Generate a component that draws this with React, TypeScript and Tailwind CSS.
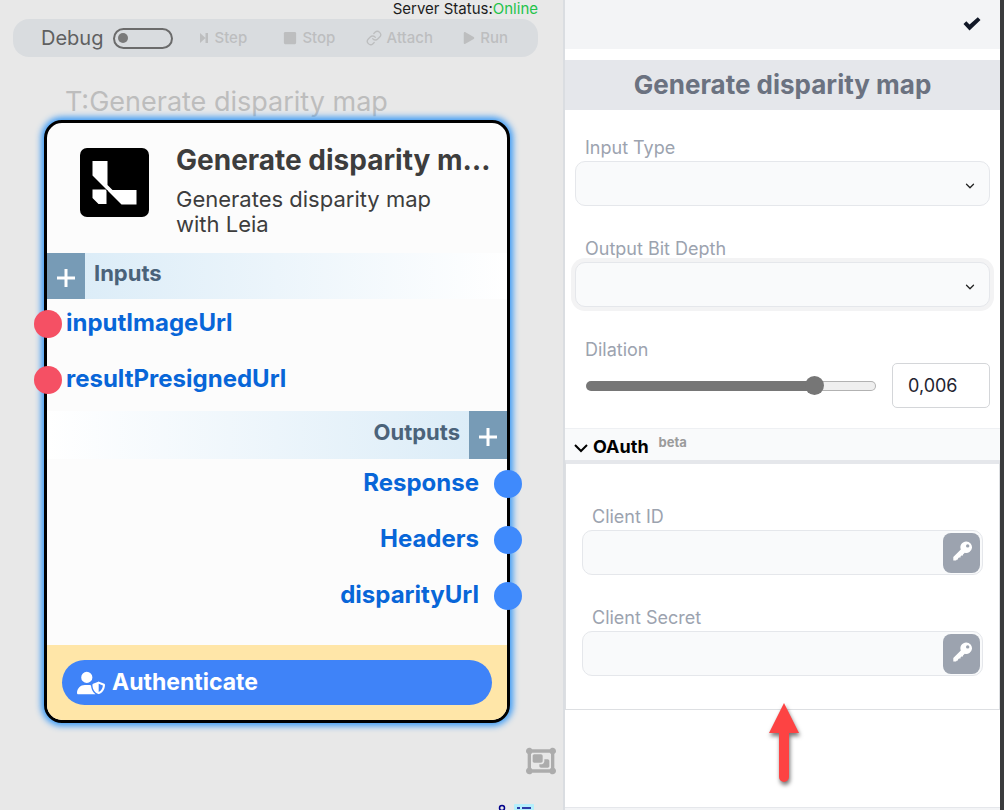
import { useState } from "react";
import type { ReactNode } from "react";
import { FaPlay, FaStop } from "react-icons/fa";
import { FaObjectGroup, FaUserShield } from "react-icons/fa6";
import { LuChevronDown, LuLink } from "react-icons/lu";

function ToolButton({ icon, label }: { icon: ReactNode; label: string }) {
  return (
    <button type="button" className="flex items-center gap-[5px] text-[15px] font-medium text-[#bdbebf]">
      {icon}
      {label}
    </button>
  );
}

function StepIcon() {
  return (
    <svg viewBox="0 0 8 12" className="mr-px h-3 w-2 fill-current" aria-hidden="true">
      <path d="M0 1L5.500 6L0 11ZM5.500 1H8V11H5.500Z" />
    </svg>
  );
}

function KeyIcon() {
  return (
    <svg viewBox="0 0 20 20" className="size-5 fill-current" aria-hidden="true">
      <path
        fillRule="evenodd"
        d="M14.300 0.600A5.700 5.700 0 1 1 12.800 11.800L11 13.500V14.500H9.500L8.500 15.500V16.500H7L6 17.500V18.500H5L4 19.500H1.300V16L8.800 8.500A5.700 5.700 0 0 1 14.300 0.600ZM15.700 3.200A1.700 1.700 0 1 0 15.700 6.600A1.700 1.700 0 1 0 15.700 3.200Z"
      />
    </svg>
  );
}

function Toolbar() {
  const [debug, setDebug] = useState(false);
  return (
    <div className="mx-[13px] mt-px mr-[25px] flex h-[38px] items-center rounded-2xl bg-[#d9dcdf] pr-[30px] pl-7">
      <label htmlFor="debug" className="text-[20px] text-[#5f6061]">
        Debug
      </label>
      <input
        id="debug"
        type="checkbox"
        checked={debug}
        onChange={(e) => setDebug(e.target.checked)}
        className="ml-2.5 flex h-[21px] w-[60px] appearance-none items-center rounded-full border-2 border-[#6b6b6b] px-[3px] before:size-2.5 before:rounded-full before:bg-[#7a7a7a] checked:justify-end"
      />
      <div className="ml-[27px] flex flex-1 items-center justify-between">
        <ToolButton label="Step" icon={<StepIcon />} />
        <ToolButton label="Stop" icon={<FaStop className="ml-1.5 size-3.5" />} />
        <ToolButton label="Attach" icon={<LuLink className="size-4" />} />
        <ToolButton label="Run" icon={<FaPlay className="size-3" />} />
      </div>
    </div>
  );
}

function LeiaLogo() {
  return (
    <svg viewBox="0 0 69 69" className="size-[69px] shrink-0" aria-hidden="true">
      <rect width="69" height="69" rx="7" fill="#000" />
      <path
        d="M12.500 13H27.500V37L32.500 42H56.500V56.500H41.500L12.500 27.500ZM12.500 41.500H25.500L27 43V56H18.500L12.500 50Z"
        fill="#fff"
      />
      <path d="M27 42V57" stroke="#000" strokeWidth="1" />
    </svg>
  );
}

function AddButton({ label }: { label: string }) {
  return (
    <button
      type="button"
      aria-label={label}
      className="flex w-[38px] shrink-0 items-center justify-center self-stretch bg-[#779bb6] pt-1"
    >
      <svg viewBox="0 0 18 18" className="size-[18px]" aria-hidden="true">
        <path d="M9 0V18M0 9H18" stroke="#fff" strokeWidth="3" />
      </svg>
    </button>
  );
}

function InputPort({ name }: { name: string }) {
  return (
    <li className="relative h-14 pl-[19px] leading-[48px]">
      <span className="absolute top-[11px] -left-[13px] size-7 rounded-full bg-[#f55064]" />
      {name}
    </li>
  );
}

function OutputPort({ name }: { name: string }) {
  return (
    <li className="relative h-14 pr-7 text-right leading-[48px]">
      <span className="absolute top-[11px] -right-[15px] size-7 rounded-full bg-[#3f8afc]" />
      {name}
    </li>
  );
}

function NodeCard() {
  return (
    <article className="mr-[53px] ml-11 flex flex-col rounded-[18px] border-[3px] border-black bg-[#fcfcfc] shadow-[0_0_6px_3px_#3d9bf5]">
      <header className="flex h-[130px] gap-[27px] pt-[25px] pr-3 pl-[33px]">
        <LeiaLogo />
        <div className="-mt-2 min-w-0 flex-1">
          <h2 className="truncate text-[28px] leading-10 font-bold text-[#3d3d3d]">Generate disparity map</h2>
          <p className="mt-[7px] pr-10 text-[22px] leading-[25px] text-[#3d3d3d]">Generates disparity map with Leia</p>
        </div>
      </header>

      <div className="flex h-[46px] bg-linear-to-r from-[#d9ebf7] to-white">
        <AddButton label="Add input" />
        <h3 className="pt-1 pl-[9px] text-[22px] leading-8 font-bold text-[#4b637a]">Inputs</h3>
      </div>
      <ul className="h-28 text-[24px] font-bold text-[#0866d8]">
        <InputPort name="inputImageUrl" />
        <InputPort name="resultPresignedUrl" />
      </ul>

      <div className="flex h-12 justify-end bg-linear-to-l from-[#d9ebf7] to-white">
        <h3 className="pt-[5px] pr-[9px] text-[22px] leading-8 font-bold text-[#4b637a]">Outputs</h3>
        <AddButton label="Add output" />
      </div>
      <ul className="h-[186px] text-[24px] font-bold text-[#0866d8]">
        <OutputPort name="Response" />
        <OutputPort name="Headers" />
        <OutputPort name="disparityUrl" />
      </ul>

      <footer className="rounded-b-[15px] bg-[#ffe6a8] p-[15px]">
        <button
          type="button"
          className="flex h-[45px] w-full items-center gap-[7px] rounded-full bg-[#3f83f8] pl-[15px] text-[23px] font-bold text-white"
        >
          <FaUserShield className="size-7" />
          Authenticate
        </button>
      </footer>
    </article>
  );
}

function Canvas() {
  return (
    <main className="flex min-w-0 flex-1 flex-col overflow-hidden bg-[#e8e8e8]">
      <p className="pr-[25px] text-right text-[15px] leading-[18px] text-[#1c1c1c]">
        Server Status:<span className="text-[#1fc34a]">Online</span>
      </p>
      <Toolbar />
      <h1 className="pt-[27px] pl-[65px] text-[27px] leading-9 text-[#bdbdbd]">T:Generate disparity map</h1>
      <NodeCard />
      <div className="mt-auto flex flex-col items-end pr-[7px]">
        <button type="button" aria-label="Group nodes" className="text-[#acacac]">
          <FaObjectGroup className="size-[30px]" />
        </button>
        <svg viewBox="0 0 36 6" className="mt-[28px] mr-[22px] h-[6px] w-9" aria-hidden="true">
          <circle cx="4" cy="4" r="2.500" fill="none" stroke="#00008b" strokeWidth="1.500" />
          <rect x="16" width="20" height="8" rx="1" fill="#b4effc" />
          <path d="M19 4H22M24 4H33" stroke="#00008b" strokeWidth="1.500" />
        </svg>
      </div>
    </main>
  );
}

function SelectField({ id, label, focused = false }: { id: string; label: string; focused?: boolean }) {
  return (
    <div>
      <label htmlFor={id} className="block pl-2.5 text-[18px] leading-[26px] text-[#9ca3af]">
        {label}
      </label>
      <div className="relative">
        <select
          id={id}
          className={
            focused
              ? "block h-[45px] w-full appearance-none rounded-[10px] border border-[#e5e7eb] bg-[#f9fafb] px-4 ring-4 ring-[#f3f3f4] outline-none"
              : "block h-[45px] w-full appearance-none rounded-[10px] border border-[#e5e7eb] bg-[#f9fafb] px-4 outline-none"
          }
        >
          <option value="" />
        </select>
        <LuChevronDown className="pointer-events-none absolute top-[18px] right-[13px] size-3.5 text-[#222]" strokeWidth={2.2} />
      </div>
    </div>
  );
}

function SecretField({ id, label }: { id: string; label: string }) {
  return (
    <div>
      <label htmlFor={id} className="block pl-2.5 text-[18px] leading-[26px] text-[#9ca3af]">
        {label}
      </label>
      <div className="flex h-[45px] items-center rounded-[10px] border border-[#e5e7eb] bg-[#f9fafb] pr-0.5">
        <input id={id} type="text" className="h-full min-w-0 flex-1 rounded-[10px] bg-transparent px-4 outline-none" />
        <button
          type="button"
          aria-label={label + " key"}
          className="flex h-10 w-[37px] items-center justify-center rounded-lg bg-[#9ca3af] pb-1 text-white"
        >
          <KeyIcon />
        </button>
      </div>
    </div>
  );
}

function DilationField() {
  const [value, setValue] = useState(81);
  const fill = value - 2;
  return (
    <div>
      <label htmlFor="dilation" className="block pl-2.5 text-[18px] leading-[26px] text-[#9ca3af]">
        Dilation
      </label>
      <div className="flex items-center gap-4 pl-[11px]">
        <input
          id="dilation"
          type="range"
          min={0}
          max={100}
          value={value}
          onChange={(e) => setValue(Number(e.target.value))}
          style={{
            background: `linear-gradient(90deg, #767676 ${fill}%, transparent ${fill}%) border-box, linear-gradient(#efefef, #efefef) padding-box, #b2b2b2 border-box`,
          }}
          className="h-2.5 min-w-0 flex-1 appearance-none rounded-full border border-transparent [&::-webkit-slider-thumb]:size-[19px] [&::-webkit-slider-thumb]:appearance-none [&::-webkit-slider-thumb]:rounded-full [&::-webkit-slider-thumb]:bg-[#767676]"
        />
        <input
          type="text"
          inputMode="decimal"
          aria-label="Dilation value"
          defaultValue="0,006"
          className="h-[45px] w-[98px] rounded-[5px] border border-[#d4d6d9] bg-white px-[15px] text-[18px] text-[#1f2430] outline-none"
        />
      </div>
    </div>
  );
}

function ArrowMarker() {
  return (
    <svg
      viewBox="0 0 44 92"
      className="pointer-events-none absolute -bottom-[84px] left-1/2 h-[92px] w-11 -translate-x-1/2 drop-shadow-[1px_3px_2px_rgba(0,0,0,0.55)]"
      aria-hidden="true"
    >
      <path d="M23 1L38 31H28V75A5 5 0 0 1 18 75V31H8Z" fill="#fd4343" />
    </svg>
  );
}

function SettingsPanel() {
  return (
    <aside className="flex w-[441px] shrink-0 flex-col border-r-4 border-l-2 border-r-[#3a3b3d] border-l-[#dadde1] bg-white">
      <div className="flex h-[49px] items-center justify-end bg-[#f3f4f6] pr-[19px] pb-0.5">
        <button type="button" aria-label="Confirm" className="text-[#111827]">
          <svg viewBox="0 0 18 14" className="h-3.5 w-[18px] fill-current" aria-hidden="true">
            <path d="M0.500 7L3.300 4.200L6.500 7.600L14.800 0.200L17.500 3L6.500 13.600Z" />
          </svg>
        </button>
      </div>
      <h2 className="mt-[11px] bg-[#e5e7eb] text-center text-[26px] leading-[50px] font-bold text-[#6b7280]">
        Generate disparity map
      </h2>

      <form className="flex flex-col gap-[30px] px-2.5 pt-[25px] pb-5">
        <SelectField id="input-type" label="Input Type" />
        <SelectField id="bit-depth" label="Output Bit Depth" focused />
        <DilationField />
      </form>

      <section className="relative">
        <button
          type="button"
          className="flex h-8 w-full items-center border-t border-[#eef0f3] bg-[#f9fafb] pt-1 pl-[9px] text-[18px] font-bold text-black"
        >
          <svg viewBox="0 0 14 9" className="mt-1 mr-[5px] h-[9px] w-3.5" aria-hidden="true">
            <path d="M1 1L7 7L13 1" fill="none" stroke="#000" strokeWidth="2" />
          </svg>
          OAuth
          <span className="mb-2.5 ml-2.5 text-[13px] leading-4 text-[#9b9b9b]">beta</span>
        </button>
        <div className="flex flex-col gap-[30px] border border-t-4 border-[#dddfe2] border-t-[#e5e7eb] px-4 pt-10 pb-[33px]">
          <SecretField id="client-id" label="Client ID" />
          <SecretField id="client-secret" label="Client Secret" />
        </div>
        <ArrowMarker />
      </section>

      <div className="mt-auto h-[3px] border-t border-[#e5e7eb] bg-[#f3f4f6]" />
    </aside>
  );
}

export default function App() {
  return (
    <div className="flex min-h-screen font-['Inter','Liberation_Sans',sans-serif]">
      <Canvas />
      <SettingsPanel />
    </div>
  );
}
